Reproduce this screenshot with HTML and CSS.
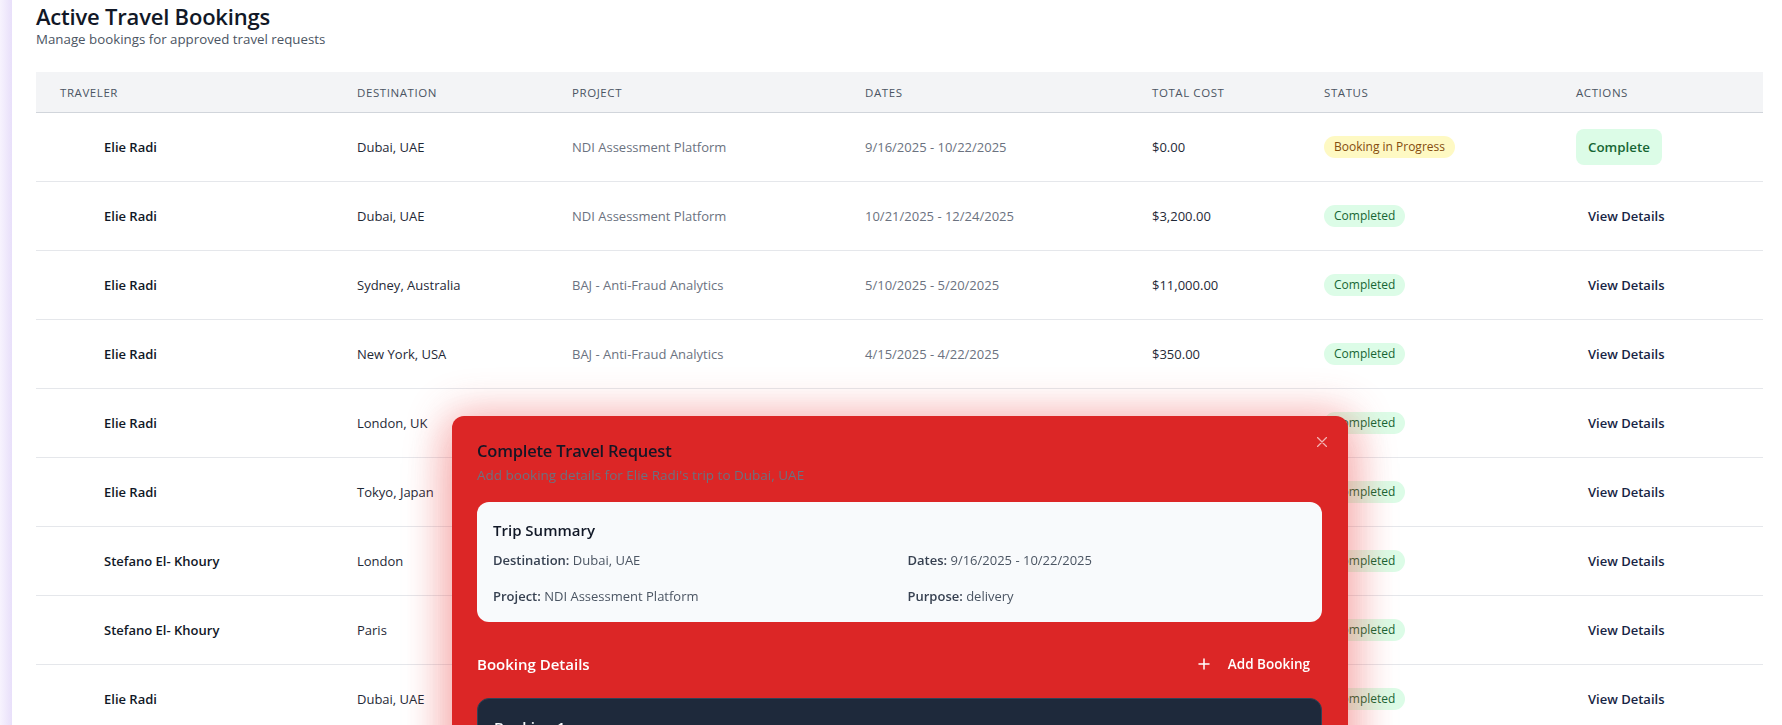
FILE: index.html
```html
<!DOCTYPE html>
<html lang="en">
<head>
<meta charset="utf-8">
<title>Active Travel Bookings</title>
<link rel="stylesheet" href="styles.css">
</head>
<body>
<div class="app">
  <aside class="edge"></aside>
  <main class="content">
    <header class="page-head">
      <h1 class="page-title">Active Travel Bookings</h1>
      <p class="page-sub">Manage bookings for approved travel requests</p>
    </header>
    <div class="table">
      <div class="row thead">
        <div class="cell">Traveler</div>
        <div class="cell">Destination</div>
        <div class="cell">Project</div>
        <div class="cell">Dates</div>
        <div class="cell">Total Cost</div>
        <div class="cell">Status</div>
        <div class="cell">Actions</div>
      </div>
      <div class="row trow">
        <div class="cell name">Elie Radi</div>
        <div class="cell dest">Dubai, UAE</div>
        <div class="cell muted">NDI Assessment Platform</div>
        <div class="cell muted">9/16/2025 - 10/22/2025</div>
        <div class="cell dest">$0.00</div>
        <div class="cell"><span class="badge progress">Booking in Progress</span></div>
        <div class="cell"><button class="btn-complete">Complete</button></div>
      </div>
      <div class="row trow">
        <div class="cell name">Elie Radi</div>
        <div class="cell dest">Dubai, UAE</div>
        <div class="cell muted">NDI Assessment Platform</div>
        <div class="cell muted">10/21/2025 - 12/24/2025</div>
        <div class="cell dest">$3,200.00</div>
        <div class="cell"><span class="badge done">Completed</span></div>
        <div class="cell"><button class="btn-view">View Details</button></div>
      </div>
      <div class="row trow">
        <div class="cell name">Elie Radi</div>
        <div class="cell dest">Sydney, Australia</div>
        <div class="cell muted">BAJ - Anti-Fraud Analytics</div>
        <div class="cell muted">5/10/2025 - 5/20/2025</div>
        <div class="cell dest">$11,000.00</div>
        <div class="cell"><span class="badge done">Completed</span></div>
        <div class="cell"><button class="btn-view">View Details</button></div>
      </div>
      <div class="row trow">
        <div class="cell name">Elie Radi</div>
        <div class="cell dest">New York, USA</div>
        <div class="cell muted">BAJ - Anti-Fraud Analytics</div>
        <div class="cell muted">4/15/2025 - 4/22/2025</div>
        <div class="cell dest">$350.00</div>
        <div class="cell"><span class="badge done">Completed</span></div>
        <div class="cell"><button class="btn-view">View Details</button></div>
      </div>
      <div class="row trow">
        <div class="cell name">Elie Radi</div>
        <div class="cell dest">London, UK</div>
        <div class="cell muted">BAJ - Anti-Fraud Analytics</div>
        <div class="cell muted">3/02/2025 - 3/09/2025</div>
        <div class="cell dest">$1,250.00</div>
        <div class="cell"><span class="badge done">Completed</span></div>
        <div class="cell"><button class="btn-view">View Details</button></div>
      </div>
      <div class="row trow">
        <div class="cell name">Elie Radi</div>
        <div class="cell dest">Tokyo, Japan</div>
        <div class="cell muted">NDI Assessment Platform</div>
        <div class="cell muted">2/10/2025 - 2/18/2025</div>
        <div class="cell dest">$4,800.00</div>
        <div class="cell"><span class="badge done">Completed</span></div>
        <div class="cell"><button class="btn-view">View Details</button></div>
      </div>
      <div class="row trow">
        <div class="cell name">Stefano El- Khoury</div>
        <div class="cell dest">London</div>
        <div class="cell muted">NDI Assessment Platform</div>
        <div class="cell muted">1/12/2025 - 1/20/2025</div>
        <div class="cell dest">$2,100.00</div>
        <div class="cell"><span class="badge done">Completed</span></div>
        <div class="cell"><button class="btn-view">View Details</button></div>
      </div>
      <div class="row trow">
        <div class="cell name">Stefano El- Khoury</div>
        <div class="cell dest">Paris</div>
        <div class="cell muted">BAJ - Anti-Fraud Analytics</div>
        <div class="cell muted">12/01/2024 - 12/08/2024</div>
        <div class="cell dest">$1,900.00</div>
        <div class="cell"><span class="badge done">Completed</span></div>
        <div class="cell"><button class="btn-view">View Details</button></div>
      </div>
      <div class="row trow">
        <div class="cell name">Elie Radi</div>
        <div class="cell dest">Dubai, UAE</div>
        <div class="cell muted">NDI Assessment Platform</div>
        <div class="cell muted">11/03/2024 - 11/10/2024</div>
        <div class="cell dest">$2,600.00</div>
        <div class="cell"><span class="badge done">Completed</span></div>
        <div class="cell"><button class="btn-view">View Details</button></div>
      </div>
    </div>
  </main>
</div>

<div class="modal">
  <button class="modal-close" aria-label="Close">
    <svg width="10" height="10" viewBox="0 0 10 10"><path d="M0.5 0.5L9.5 9.5M9.5 0.5L0.5 9.5" stroke="currentColor" stroke-width="1.3" fill="none" stroke-linecap="round"/></svg>
  </button>
  <h2 class="modal-title">Complete Travel Request</h2>
  <p class="modal-sub">Add booking details for Elie Radi's trip to Dubai, UAE</p>

  <section class="summary">
    <h3 class="summary-title">Trip Summary</h3>
    <div class="summary-grid">
      <p class="summary-item"><strong>Destination:</strong> Dubai, UAE</p>
      <p class="summary-item"><strong>Dates:</strong> 9/16/2025 - 10/22/2025</p>
      <p class="summary-item"><strong>Project:</strong> NDI Assessment Platform</p>
      <p class="summary-item"><strong>Purpose:</strong> delivery</p>
    </div>
  </section>

  <div class="booking-head">
    <h3 class="booking-head-title">Booking Details</h3>
    <button class="btn-add">
      <svg width="16" height="16" viewBox="0 0 16 16"><path d="M8 3v10M3 8h10" stroke="currentColor" stroke-width="1.5" fill="none" stroke-linecap="round"/></svg>
      <span>Add Booking</span>
    </button>
  </div>

  <section class="booking-card">
    <h4 class="booking-card-title">Booking 1</h4>
  </section>
</div>
</body>
</html>
```

FILE: styles.css
```css
* { box-sizing: border-box; }

html, body {
  margin: 0;
  height: 100%;
  overflow: hidden;
}

body {
  font-family: "Open Sans", "Noto Sans", "Liberation Sans", sans-serif;
  background: #ffffff;
  color: #111827;
}

.app {
  display: flex;
  min-height: 100vh;
}

.edge {
  width: 12px;
  flex: none;
  background: linear-gradient(to right, #f7f3fe, #e8dffa);
}

.content {
  flex: 1;
  padding: 2px 19px 0 24px;
}

.page-title {
  margin: 0;
  font-size: 22px;
  line-height: 28px;
  font-weight: 600;
  color: #111827;
  letter-spacing: -0.2px;
}

.page-sub {
  margin: 0;
  font-size: 13.3px;
  line-height: 18px;
  color: #4b5563;
}

.table {
  margin-top: 24px;
}

.row {
  display: grid;
  grid-template-columns: 297px 215px 293px 287px 172px 252px 211px;
  align-items: center;
}

.cell {
  padding-left: 24px;
  white-space: nowrap;
}

.thead {
  height: 41px;
  background: #f3f4f6;
  border-bottom: 1px solid #d1d5db;
  font-size: 11.5px;
  font-weight: 500;
  text-transform: uppercase;
  letter-spacing: 0.05em;
  color: #4b5563;
}

.trow {
  height: 69px;
  border-bottom: 1px solid #e5e7eb;
  font-size: 13px;
}

.name {
  padding-left: 68px;
  font-weight: 600;
  color: #111827;
}

.dest {
  color: #1f2937;
}

.muted {
  color: #6b7280;
}

.badge {
  display: inline-block;
  padding: 2px 10px;
  border-radius: 999px;
  font-size: 12px;
  line-height: 18px;
  font-weight: 500;
}

.badge.progress {
  background: #fef9c3;
  color: #854d0e;
}

.badge.done {
  background: #dcfce7;
  color: #166534;
}

.btn-complete {
  font-family: inherit;
  border: 0;
  background: #dcfce7;
  color: #166534;
  font-size: 13.3px;
  font-weight: 600;
  line-height: 20px;
  padding: 8px 12px;
  border-radius: 8px;
}

.btn-view {
  font-family: inherit;
  border: 0;
  background: transparent;
  color: #172544;
  font-size: 13px;
  font-weight: 600;
  line-height: 20px;
  padding: 8px 12px;
}

/* Modal */
.modal {
  position: fixed;
  left: 452px;
  top: 416px;
  width: 896px;
  background: #dc2626;
  border-radius: 12px;
  padding: 21px 26px 24px 25px;
  box-shadow: 0 0 40px 6px rgba(239, 68, 68, 0.32), 0 20px 50px rgba(220, 38, 38, 0.28);
}

.modal-close {
  position: absolute;
  top: 21px;
  right: 21px;
  width: 10px;
  height: 10px;
  padding: 0;
  border: 0;
  background: transparent;
  color: rgba(255, 255, 255, 0.65);
  display: flex;
}

.modal-title {
  margin: 0;
  font-size: 16.5px;
  line-height: 28px;
  font-weight: 600;
  letter-spacing: -0.2px;
  color: #161625;
}

.modal-sub {
  margin: 0;
  font-size: 13.5px;
  line-height: 20px;
  color: #6b7280;
}

.summary {
  margin-top: 17px;
  background: #f8fafc;
  border-radius: 12px;
  padding: 16px;
}

.summary-title {
  margin: 0 0 8px;
  font-size: 15px;
  line-height: 24px;
  font-weight: 600;
  color: #111827;
}

.summary-grid {
  display: grid;
  grid-template-columns: 1fr 1fr;
  gap: 16px;
  font-size: 13px;
  line-height: 20px;
  color: #4b5563;
}

.summary-item {
  margin: 0;
}

.summary-grid strong {
  font-weight: 600;
  color: #374151;
}

.booking-head {
  margin-top: 24px;
  height: 36px;
  display: flex;
  align-items: center;
  justify-content: space-between;
}

.booking-head-title {
  margin: 0;
  font-size: 15px;
  line-height: 24px;
  font-weight: 600;
  color: #ffffff;
}

.btn-add {
  font-family: inherit;
  display: flex;
  align-items: center;
  gap: 16px;
  height: 36px;
  padding: 0 12px;
  border: 0;
  background: transparent;
  color: #ffffff;
  font-size: 13.5px;
  font-weight: 600;
}

.btn-add svg {
  display: block;
}

.booking-card {
  margin-top: 16px;
  background: #1e293b;
  border: 1px solid #334155;
  border-radius: 12px;
  padding: 16px;
  height: 200px;
}

.booking-card-title {
  margin: 0;
  font-size: 15px;
  line-height: 24px;
  font-weight: 600;
  color: #f8fafc;
}
```
